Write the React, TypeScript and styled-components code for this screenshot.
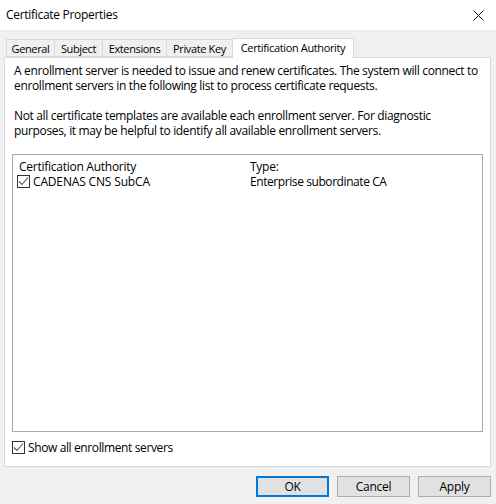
import React from 'react';
import styled, { createGlobalStyle } from 'styled-components';

const GlobalStyle = createGlobalStyle`
  html, body {
    margin: 0;
    padding: 0;
    background: #f0f0f0;
  }
  body {
    font-family: "Open Sans", "Noto Sans", sans-serif;
    font-size: 12px;
    color: #000;
  }
`;

const Dialog = styled.div`
  width: 496px;
  height: 504px;
  display: flex;
  flex-direction: column;
  overflow: hidden;
  background: #f0f0f0;
`;

const TitleBar = styled.div`
  height: 30px;
  flex: none;
  box-sizing: border-box;
  background: #fff;
  display: flex;
  align-items: center;
  justify-content: space-between;
  padding: 0 12px 2px 6px;
`;

const Title = styled.span`
  letter-spacing: -0.3px;
`;

const CloseIcon = styled.svg`
  width: 11px;
  height: 11px;
  display: block;
  margin-top: 2px;
`;

const Tabs = styled.div`
  height: 20px;
  margin: 7px 0 0 6px;
  flex: none;
  display: flex;
  align-items: flex-end;
  position: relative;
  z-index: 1;
`;

const Tab = styled.div<{ $active?: boolean; $width: number }>`
  width: ${(p) => p.$width}px;
  height: ${(p) => (p.$active ? 20 : 18)}px;
  margin-bottom: ${(p) => (p.$active ? -1 : 0)}px;
  margin-left: ${(p) => (p.$active ? -1 : 0)}px;
  box-sizing: border-box;
  border: 1px solid #d9d9d9;
  border-left-width: ${(p) => (p.$active ? 1 : 0)}px;
  border-bottom: ${(p) => (p.$active ? 'none' : '1px solid #d9d9d9')};
  background: ${(p) => (p.$active ? '#fff' : '#f0f0f0')};
  display: flex;
  justify-content: center;
  align-items: ${(p) => (p.$active ? 'flex-start' : 'center')};
  font-size: 11px;
  line-height: 17px;
  letter-spacing: -0.36px;
  white-space: nowrap;
  &:first-child {
    border-left-width: 1px;
  }
`;

const Panel = styled.div`
  width: 487px;
  height: 410px;
  margin-left: 4px;
  flex: none;
  box-sizing: border-box;
  background: #fff;
  border: 1px solid #d9d9d9;
  padding: 5px 7px 0;
  display: flex;
  flex-direction: column;
`;

const Intro = styled.p`
  margin: 0 0 0 2px;
  line-height: 15px;
  letter-spacing: -0.34px;
  white-space: nowrap;
  & + & {
    margin-top: 15px;
  }
`;

const ListBox = styled.div`
  margin-top: 16px;
  height: 278px;
  flex: none;
  box-sizing: border-box;
  border: 1px solid #a9a9a9;
  padding: 4px 0 0 6px;
`;

const ListGrid = styled.div`
  display: grid;
  grid-template-columns: 231px 1fr;
  line-height: 15px;
  letter-spacing: -0.26px;
`;

const ListItem = styled.div`
  display: flex;
  align-items: center;
  gap: 3px;
  margin-left: -2px;
  letter-spacing: -0.16px;
`;

const TypeCell = styled.div`
  letter-spacing: -0.42px;
`;

const CheckBox = styled.svg`
  width: 13px;
  height: 13px;
  flex: none;
  display: block;
`;

const ShowAll = styled.label`
  margin-top: 8px;
  display: flex;
  align-items: center;
  gap: 3px;
  line-height: 15px;
  letter-spacing: -0.38px;
`;

const Footer = styled.div`
  margin-top: 9px;
  padding-right: 5px;
  display: flex;
  justify-content: flex-end;
  gap: 8px;
`;

const Button = styled.button<{ $default?: boolean }>`
  width: 73px;
  height: 21px;
  padding: 0;
  box-sizing: border-box;
  background: #e1e1e1;
  border: ${(p) => (p.$default ? '2px solid #0078d7' : '1px solid #adadad')};
  font: inherit;
  letter-spacing: -0.3px;
  color: #000;
`;

const Check = () => (
  <CheckBox viewBox="0 0 13 13">
    <rect x="0.5" y="0.5" width="12" height="12" fill="#fff" stroke="#333" />
    <path d="M2 6.5 L5 9.5 L11 2.5" fill="none" stroke="#555" strokeWidth="1.1" />
  </CheckBox>
);

const tabs = [
  { label: 'General', width: 49 },
  { label: 'Subject', width: 48 },
  { label: 'Extensions', width: 64 },
  { label: 'Private Key', width: 66 },
  { label: 'Certification Authority', width: 122, active: true },
];

export default function App() {
  return (
    <Dialog>
      <GlobalStyle />
      <TitleBar>
        <Title>Certificate Properties</Title>
        <CloseIcon viewBox="0 0 11 11">
          <path d="M0.5 0.5 L10.5 10.5 M10.5 0.5 L0.5 10.5" stroke="#111" strokeWidth="1" fill="none" />
        </CloseIcon>
      </TitleBar>
      <Tabs>
        {tabs.map((tab) => (
          <Tab key={tab.label} $width={tab.width} $active={tab.active}>
            {tab.label}
          </Tab>
        ))}
      </Tabs>
      <Panel>
        <Intro>
          A enrollment server is needed to issue and renew certificates. The system will connect to
          <br />
          enrollment servers in the following list to process certificate requests.
        </Intro>
        <Intro>
          Not all certificate templates are available each enrollment server. For diagnostic
          <br />
          purposes, it may be helpful to identify all available enrollment servers.
        </Intro>
        <ListBox>
          <ListGrid>
            <div>Certification Authority</div>
            <div>Type:</div>
            <ListItem>
              <Check />
              CADENAS CNS SubCA
            </ListItem>
            <TypeCell>Enterprise subordinate CA</TypeCell>
          </ListGrid>
        </ListBox>
        <ShowAll>
          <Check />
          Show all enrollment servers
        </ShowAll>
      </Panel>
      <Footer>
        <Button $default>OK</Button>
        <Button>Cancel</Button>
        <Button>Apply</Button>
      </Footer>
    </Dialog>
  );
}
